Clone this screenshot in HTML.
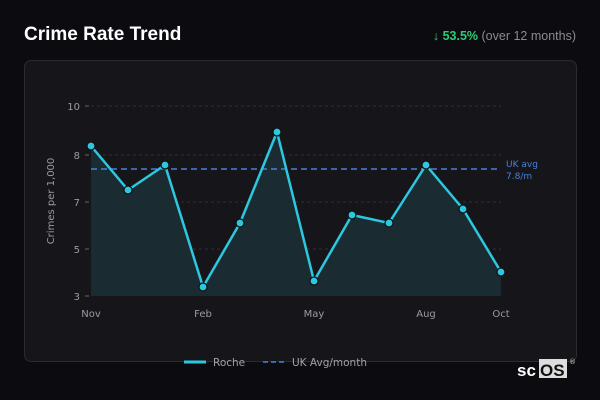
<!DOCTYPE html>
<html><head><meta charset="utf-8"><style>
body{margin:0;width:600px;height:400px;background:#0c0c10;font-family:"Liberation Sans","DejaVu Sans",sans-serif;overflow:hidden;position:relative}
.t{position:absolute;left:24px;top:24px;color:#fff;font-weight:bold;font-size:19px}
.s{position:absolute;right:24px;top:29px;font-size:12.5px;color:#8a8a90}
.s b{color:#2ecc71}
.card{position:absolute;left:24px;top:60px;width:551px;height:300px;border:1px solid #2b2b30;border-radius:7px;background:#16161a}
svg{position:absolute;left:0;top:0}
</style></head><body>
<div class="t">Crime Rate Trend</div>
<div class="s"><b>↓ 53.5%</b> (over 12 months)</div>
<div class="card"></div>
<svg width="600" height="400" font-family="DejaVu Sans,Liberation Sans,sans-serif">
<g stroke="#2e2e34" stroke-dasharray="3,3" stroke-width="1">
<line x1="91" x2="501" y1="106" y2="106"/><line x1="91" x2="501" y1="155" y2="155"/><line x1="91" x2="501" y1="202" y2="202"/><line x1="91" x2="501" y1="249" y2="249"/>
</g>
<g fill="#9a9aa0" font-size="10" text-anchor="end">
<text x="80" y="110">10</text><text x="80" y="159">8</text><text x="80" y="206">7</text><text x="80" y="253">5</text><text x="80" y="300">3</text>
</g>
<g stroke="#666" stroke-width="1"><line x1="85" x2="89" y1="106" y2="106"/><line x1="85" x2="89" y1="155" y2="155"/><line x1="85" x2="89" y1="202" y2="202"/><line x1="85" x2="89" y1="249" y2="249"/><line x1="85" x2="89" y1="296" y2="296"/></g>
<text x="54" y="201" fill="#9a9aa0" font-size="10" text-anchor="middle" transform="rotate(-90 54 201)">Crimes per 1,000</text>
<g fill="#9a9aa0" font-size="10" text-anchor="middle">
<text x="91" y="317">Nov</text><text x="203" y="317">Feb</text><text x="314" y="317">May</text><text x="426" y="317">Aug</text><text x="501" y="317">Oct</text>
</g>
<polygon fill="#1a2b31" points="91,296 91,146 128,190 165,165 203,287 240,223 277,132 314,281 352,215 389,223 426,165 463,209 501,272 501,296"/>
<line x1="91" x2="497" y1="169" y2="169" stroke="#4a7fd8" stroke-width="1.5" stroke-dasharray="6,4"/>
<text x="506" y="167" fill="#4a7fd8" font-size="9">UK avg</text><text x="506" y="179" fill="#4a7fd8" font-size="9">7.8/m</text>
<polyline fill="none" stroke="#2cc8e0" stroke-width="2.5" stroke-linejoin="round" points="91,146 128,190 165,165 203,287 240,223 277,132 314,281 352,215 389,223 426,165 463,209 501,272"/>
<g fill="#2cc8e0" stroke="#111" stroke-width="1.2">
<circle cx="91" cy="146" r="4"/><circle cx="128" cy="190" r="4"/><circle cx="165" cy="165" r="4"/><circle cx="203" cy="287" r="4"/><circle cx="240" cy="223" r="4"/><circle cx="277" cy="132" r="4"/><circle cx="314" cy="281" r="4"/><circle cx="352" cy="215" r="4"/><circle cx="389" cy="223" r="4"/><circle cx="426" cy="165" r="4"/><circle cx="463" cy="209" r="4"/><circle cx="501" cy="272" r="4"/>
</g>
<line x1="184" x2="206" y1="362" y2="362" stroke="#2cc8e0" stroke-width="3"/>
<text x="213" y="366" fill="#a0a0a6" font-size="10.5">Roche</text>
<line x1="263" x2="285" y1="362" y2="362" stroke="#4a7fd8" stroke-width="1.5" stroke-dasharray="5,3"/>
<text x="292" y="366" fill="#a0a0a6" font-size="10.5">UK Avg/month</text>
<text x="517" y="376" fill="#fff" font-size="17" font-weight="bold" font-family="Liberation Sans,sans-serif">sc</text>
<rect x="539" y="359" width="28" height="19" fill="#ddd"/>
<text x="540" y="376" fill="#111" font-size="17" font-weight="bold" font-family="Liberation Sans,sans-serif">OS</text>
<text x="569" y="364" fill="#ccc" font-size="7">®</text>
</svg>
</body></html>
